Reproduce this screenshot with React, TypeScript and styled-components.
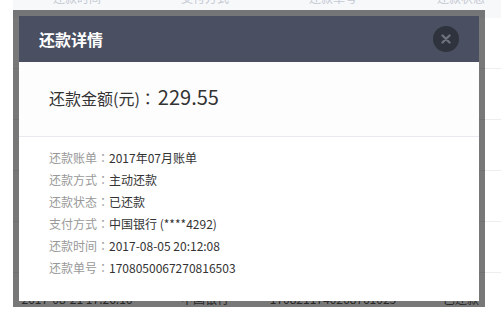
import React from 'react';
import styled, { createGlobalStyle } from 'styled-components';

const GlobalStyle = createGlobalStyle`
    html, body {
        margin: 0;
        padding: 0;
        background: #ffffff;
        overflow: hidden;
        font-family: "Microsoft YaHei", "Noto Sans CJK SC", sans-serif;
    }
`;

type Repayment = {
    time: string;
    bank: string;
    orderNo: string;
    status: string;
};

const columns = ['还款时间', '支付方式', '还款单号', '还款状态'];

const rows: Repayment[] = [
    { time: '2017-08-05 20:12:08', bank: '中国银行', orderNo: '1708050067270816503', status: '已还款' },
    { time: '2017-08-09 10:31:45', bank: '中国银行', orderNo: '1708090012345678901', status: '已还款' },
    { time: '2017-08-12 15:08:22', bank: '中国银行', orderNo: '1708120087654321098', status: '已还款' },
    { time: '2017-08-15 09:44:37', bank: '中国银行', orderNo: '1708150023456789012', status: '已还款' },
    { time: '2017-08-18 18:20:51', bank: '中国银行', orderNo: '1708180034567890123', status: '已还款' },
    { time: '2017-08-21 17:26:16', bank: '中国银行', orderNo: '1708211740268761025', status: '已还款' },
];

const details = [
    { label: '还款账单', value: '2017年07月账单' },
    { label: '还款方式', value: '主动还款' },
    { label: '还款状态', value: '已还款' },
    { label: '支付方式', value: '中国银行 (****4292)' },
    { label: '还款时间', value: '2017-08-05 20:12:08' },
    { label: '还款单号', value: '1708050067270816503' },
];

const App: React.FC = () => {
    return (
        <>
            <GlobalStyle />
            <RecordTable>
                <thead>
                    <tr>
                        {columns.map((col) => (
                            <HeadCell key={col}>{col}</HeadCell>
                        ))}
                    </tr>
                </thead>
                <tbody>
                    {rows.map((row) => (
                        <BodyRow key={row.orderNo}>
                            <BodyCell>{row.time}</BodyCell>
                            <BodyCell>{row.bank}</BodyCell>
                            <BodyCell>{row.orderNo}</BodyCell>
                            <BodyCell>{row.status}</BodyCell>
                        </BodyRow>
                    ))}
                </tbody>
            </RecordTable>

            <Dialog>
                <DialogHeader>
                    <DialogTitle>还款详情</DialogTitle>
                    <CloseButton aria-label="关闭">
                        <svg width="10" height="10" viewBox="0 0 10 10">
                            <path
                                d="M1.5 1.5 L8.5 8.5 M8.5 1.5 L1.5 8.5"
                                stroke="#6c717c"
                                strokeWidth="2.4"
                                strokeLinecap="round"
                            />
                        </svg>
                    </CloseButton>
                </DialogHeader>

                <AmountSection>
                    <AmountLabel>
                        还款金额(元)<Colon>：</Colon>
                    </AmountLabel>
                    <AmountValue>229.55</AmountValue>
                </AmountSection>

                <DetailList>
                    {details.map((item) => (
                        <DetailRow key={item.label}>
                            <DetailLabel>
                                {item.label}
                                <Colon>：</Colon>
                            </DetailLabel>
                            <DetailValue>{item.value}</DetailValue>
                        </DetailRow>
                    ))}
                </DetailList>
            </Dialog>
        </>
    );
};

export default App;

const RecordTable = styled.table`
    border-collapse: collapse;
    table-layout: fixed;
    width: 512px;
    margin: -22px 0 0 13px;
`;

const HeadCell = styled.th`
    width: 128px;
    height: 40px;
    padding: 0;
    background: #f7f8fa;
    color: #c5cad4;
    font-size: 12px;
    font-weight: normal;
    text-align: center;
    line-height: 40px;
`;

const BodyRow = styled.tr`
    border-bottom: 1px solid #eeeeee;
`;

const BodyCell = styled.td`
    height: 50px;
    padding: 0;
    color: #555555;
    font-size: 12px;
    text-align: center;
    white-space: nowrap;
    overflow: hidden;
`;

const Dialog = styled.div`
    position: fixed;
    left: 13px;
    top: 10px;
    width: 460px;
    height: 285px;
    border: 6px solid rgba(0, 0, 0, 0.53);
    background: #ffffff;
    background-clip: padding-box;
    display: flex;
    flex-direction: column;
`;

const DialogHeader = styled.div`
    height: 46px;
    flex-shrink: 0;
    background: #4a5061;
    display: flex;
    align-items: center;
    justify-content: space-between;
    padding: 0 20px;
`;

const DialogTitle = styled.h3`
    margin: 0;
    color: #ffffff;
    font-size: 16px;
    font-weight: bold;
`;

const CloseButton = styled.button`
    width: 26px;
    height: 26px;
    border: none;
    border-radius: 50%;
    background: #2f333d;
    padding: 0;
    display: flex;
    align-items: center;
    justify-content: center;
    cursor: pointer;
`;

const Colon = styled.span`
    display: inline-block;
    width: 1em;
    text-align: center;
    font-family: "Noto Sans CJK TC", "Noto Sans CJK SC", sans-serif;
`;

const AmountSection = styled.div`
    height: 75px;
    box-sizing: border-box;
    padding: 22px 30px 0;
    border-bottom: 1px solid #e9e9ef;
    background: #fdfdfe;
    display: flex;
    align-items: baseline;
    color: #333333;
`;

const AmountLabel = styled.span`
    font-size: 16px;
    line-height: 26px;
`;

const AmountValue = styled.span`
    margin-left: 2px;
    font-size: 20px;
    line-height: 26px;
`;

const DetailList = styled.div`
    padding: 10px 30px 0;
    display: flex;
    flex-direction: column;
`;

const DetailRow = styled.div`
    display: flex;
    font-size: 12px;
    line-height: 22px;
`;

const DetailLabel = styled.span`
    color: #999999;
`;

const DetailValue = styled.span`
    color: #333333;
`;
